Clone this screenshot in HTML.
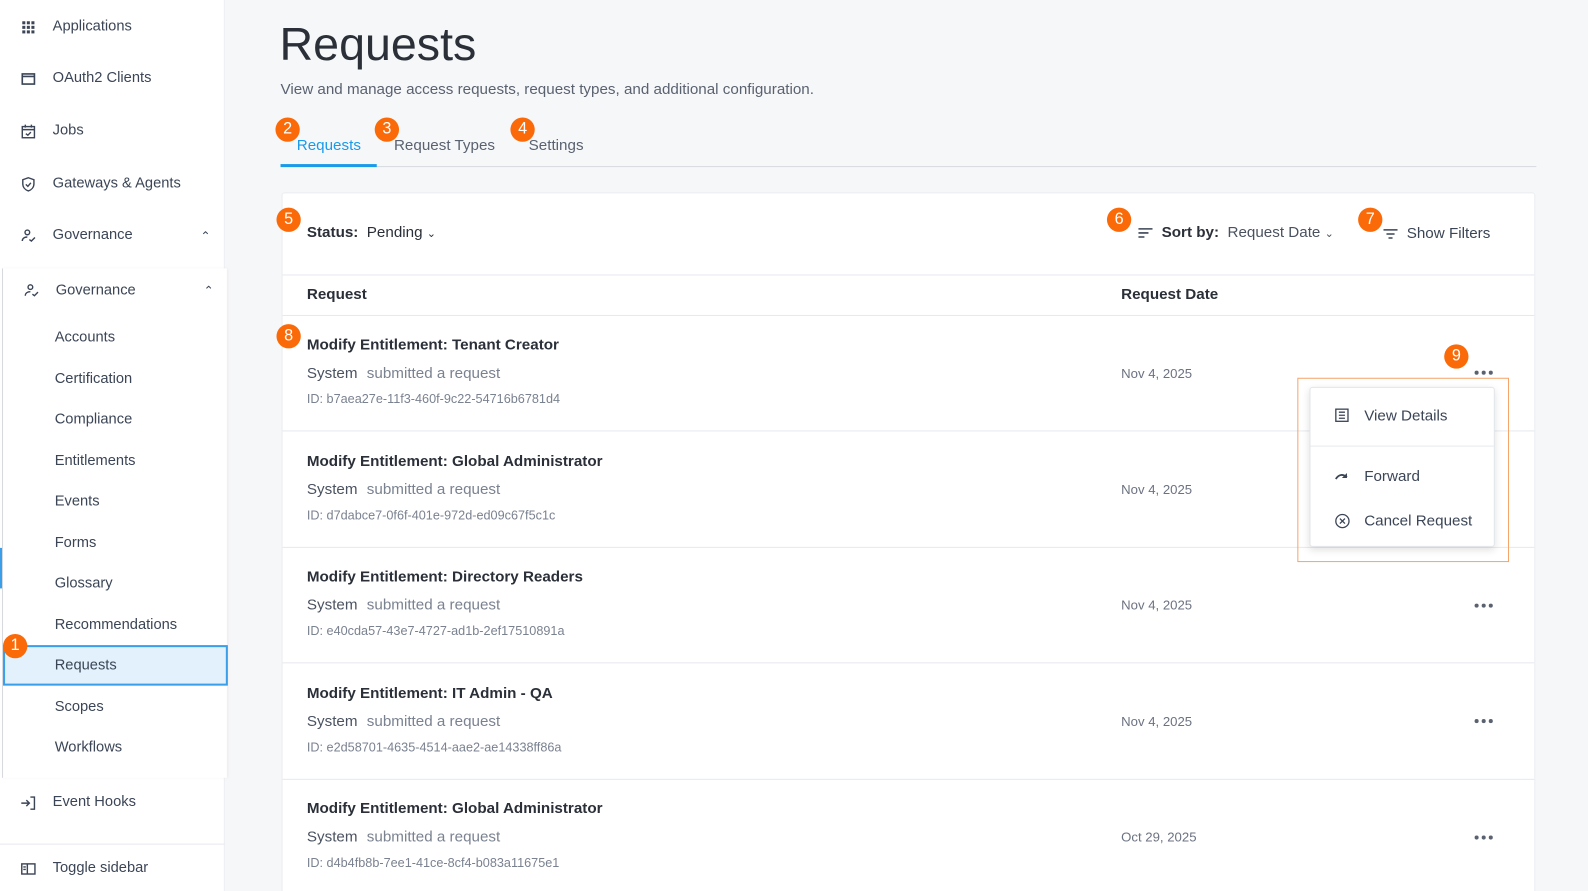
<!DOCTYPE html>
<html><head><meta charset="utf-8"><style>
*{box-sizing:border-box;margin:0;padding:0}
html,body{width:1588px;height:891px;overflow:hidden;background:#f6f7f9}
body{font-family:"Liberation Sans",sans-serif;color:#1f2937;position:relative}
#w{position:absolute;left:0;top:0;width:1568px;height:880px;transform:scale(1.01276);transform-origin:0 0}
.abs{position:absolute}
.sb{position:absolute;left:0;top:0;width:222px;height:880px;background:#fff;border-right:1px solid #eceef2}
.it{position:absolute;left:52px;font-size:14.5px;color:#3b4556;white-space:nowrap}
.ic{position:absolute;left:20px;width:16px;height:16px}
.sub{position:absolute;left:2px;top:265px;width:222px;height:503px;background:#fff;border-left:1px solid #d6d9de;box-shadow:1px 0 3px rgba(0,0,0,.05)}
.badge{position:absolute;width:24px;height:24px;border-radius:50%;background:#fb6a08;color:#fff;font-size:16px;text-align:center;line-height:24px}
.card{position:absolute;left:278px;top:190px;width:1238px;height:720px;background:#fff;border:1px solid #eaecf0;border-radius:3px}
.hl{position:absolute;left:0;right:0;height:1px;background:#e6e9ee}
.t{position:absolute;left:24px;font-size:15px;font-weight:bold;color:#2a2f38;white-space:nowrap}
.s{position:absolute;left:24px;font-size:15px;color:#4a5260;white-space:nowrap}
.s span{color:#7a8290;margin-left:5px}
.id{position:absolute;left:24px;font-size:12.5px;color:#7a8290;white-space:nowrap}
.d{position:absolute;left:828px;font-size:13px;color:#6b7280}
.dots{position:absolute;left:1177px;display:flex;gap:3px}
.dots i{display:block;width:4px;height:4px;border-radius:50%;background:#5a6270}
</style></head><body><div id="w">
<div class="sb">
 <svg class="ic" style="top:19px" viewBox="0 0 16 16" fill="#3b4556"><rect x="2" y="2" width="3" height="3"/><rect x="6.5" y="2" width="3" height="3"/><rect x="11" y="2" width="3" height="3"/><rect x="2" y="6.5" width="3" height="3"/><rect x="6.5" y="6.5" width="3" height="3"/><rect x="11" y="6.5" width="3" height="3"/><rect x="2" y="11" width="3" height="3"/><rect x="6.5" y="11" width="3" height="3"/><rect x="11" y="11" width="3" height="3"/></svg>
 <div class="it" style="top:18px">Applications</div>
 <svg class="ic" style="top:70px" viewBox="0 0 16 16" fill="none" stroke="#3b4556" stroke-width="1.6"><rect x="2" y="3" width="12" height="10"/><line x1="2" y1="5.5" x2="14" y2="5.5"/></svg>
 <div class="it" style="top:69px">OAuth2 Clients</div>
 <svg class="ic" style="top:122px" viewBox="0 0 16 16" fill="none" stroke="#3b4556" stroke-width="1.4"><rect x="2" y="3" width="12" height="11"/><line x1="2" y1="6" x2="14" y2="6"/><line x1="5" y1="1" x2="5" y2="4"/><line x1="11" y1="1" x2="11" y2="4"/><path d="M5.5 10l2 1.5 3-3"/></svg>
 <div class="it" style="top:121px">Jobs</div>
 <svg class="ic" style="top:174px" viewBox="0 0 16 16" fill="none" stroke="#3b4556" stroke-width="1.4"><path d="M8 1.5l5.5 2v4c0 3.5-2.5 6-5.5 7-3-1-5.5-3.5-5.5-7v-4z"/><path d="M5.5 8l2 2 3-3.5"/></svg>
 <div class="it" style="top:173px">Gateways &amp; Agents</div>
 <svg class="ic" style="top:225px" viewBox="0 0 16 16" fill="none" stroke="#3b4556" stroke-width="1.4"><circle cx="7" cy="4.5" r="2.3"/><path d="M2 13c0-2.5 2-4 5-4"/><path d="M9 11.5l2 1.5 3.5-3.5"/></svg>
 <div class="it" style="top:224px">Governance</div>
 <div class="abs" style="left:198px;top:226px;font-size:12px;color:#3b4556">&#8963;</div>
 <svg class="ic" style="top:785px" viewBox="0 0 16 16" fill="none" stroke="#3b4556" stroke-width="1.4"><path d="M1 8h8M6 5l3 3-3 3"/><path d="M10 2h4v12h-4"/></svg>
 <div class="it" style="top:784px">Event Hooks</div>
 <div class="abs" style="left:0;top:833px;width:222px;height:1px;background:#e6e9ee"></div>
 <svg class="ic" style="top:850px" viewBox="0 0 16 16" fill="none" stroke="#3b4556" stroke-width="1.4"><rect x="1.5" y="3" width="13" height="10"/><line x1="7" y1="3" x2="7" y2="13"/><line x1="3" y1="6" x2="5.5" y2="6"/><line x1="3" y1="8.5" x2="5.5" y2="8.5"/></svg>
 <div class="it" style="top:849px">Toggle sidebar</div>
</div>
<div class="sub">
 <svg class="ic" style="left:20px;top:14px" viewBox="0 0 16 16" fill="none" stroke="#3b4556" stroke-width="1.4"><circle cx="7" cy="4.5" r="2.3"/><path d="M2 13c0-2.5 2-4 5-4"/><path d="M9 11.5l2 1.5 3.5-3.5"/></svg>
 <div class="it" style="top:14px">Governance</div>
 <div class="abs" style="left:198px;top:15px;font-size:12px;color:#3b4556">&#8963;</div>
 <div class="it" style="left:51px;top:60px">Accounts</div>
 <div class="it" style="left:51px;top:101px">Certification</div>
 <div class="it" style="left:51px;top:141px">Compliance</div>
 <div class="it" style="left:51px;top:182px">Entitlements</div>
 <div class="it" style="left:51px;top:222px">Events</div>
 <div class="it" style="left:51px;top:263px">Forms</div>
 <div class="it" style="left:51px;top:303px">Glossary</div>
 <div class="it" style="left:51px;top:344px">Recommendations</div>
 <div class="abs" style="left:0;top:372px;width:222px;height:40px;background:#e2f1fb;border:2px solid #3a9ee8"></div>
 <div class="it" style="left:51px;top:384px">Requests</div>
 <div class="it" style="left:51px;top:425px">Scopes</div>
 <div class="it" style="left:51px;top:465px">Workflows</div>
</div>
<div class="abs" style="left:0;top:541px;width:2px;height:40px;background:#3a9ee8"></div>
<div class="badge" style="left:3px;top:626px">1</div>

<div class="abs" style="left:276px;top:16px;font-size:46px;color:#2a2f38;font-weight:300">Requests</div>
<div class="abs" style="left:277px;top:80px;font-size:15px;color:#5a6270">View and manage access requests, request types, and additional configuration.</div>
<div class="abs" style="left:277px;top:164px;width:1240px;height:1px;background:#d6d9de"></div>
<div class="abs" style="left:277px;top:162px;width:95px;height:3px;background:#1a9ae8"></div>
<div class="abs" style="left:293px;top:135px;font-size:15px;color:#1a9ae8">Requests</div>
<div class="abs" style="left:389px;top:135px;font-size:15px;color:#5a6270">Request Types</div>
<div class="abs" style="left:522px;top:135px;font-size:15px;color:#5a6270">Settings</div>
<div class="badge" style="left:272px;top:116px">2</div>
<div class="badge" style="left:370px;top:116px">3</div>
<div class="badge" style="left:504px;top:116px">4</div>

<div class="card">
 <div class="abs" style="left:24px;top:30px;font-size:15px;color:#2a2f38"><b>Status:</b>&nbsp; Pending <span style="font-size:11px">&#8964;</span></div>
 <svg class="abs" style="left:845px;top:33px" width="14" height="12" viewBox="0 0 14 12" stroke="#3b4556" stroke-width="1.5"><line x1="0" y1="2" x2="14" y2="2"/><line x1="0" y1="6" x2="10" y2="6"/><line x1="0" y1="10" x2="6" y2="10"/></svg>
 <div class="abs" style="left:868px;top:30px;font-size:15px;color:#4a5260"><b style="color:#2a2f38">Sort by:</b>&nbsp; Request Date <span style="font-size:11px">&#8964;</span></div>
 <svg class="abs" style="left:1087px;top:34px" width="14" height="12" viewBox="0 0 14 12" stroke="#3b4556" stroke-width="1.5"><line x1="0" y1="2" x2="14" y2="2"/><line x1="3" y1="6" x2="11" y2="6"/><line x1="5" y1="10" x2="9" y2="10"/></svg>
 <div class="abs" style="left:1110px;top:31px;font-size:15px;color:#3b4556">Show Filters</div>
 <div class="hl" style="top:80px"></div>
 <div class="t" style="top:91px">Request</div><div class="t" style="left:828px;top:91px">Request Date</div>
 <div class="hl" style="top:120px"></div>

 <div class="t" style="top:141px">Modify Entitlement: Tenant Creator</div>
 <div class="s" style="top:169px">System <span>submitted a request</span></div>
 <div class="id" style="top:196px">ID: b7aea27e-11f3-460f-9c22-54716b6781d4</div>
 <div class="d" style="top:170px">Nov 4, 2025</div>
 <div class="dots" style="top:175px"><i></i><i></i><i></i></div>
 <div class="hl" style="top:234px"></div>

 <div class="t" style="top:256px">Modify Entitlement: Global Administrator</div>
 <div class="s" style="top:284px">System <span>submitted a request</span></div>
 <div class="id" style="top:311px">ID: d7dabce7-0f6f-401e-972d-ed09c67f5c1c</div>
 <div class="d" style="top:285px">Nov 4, 2025</div>
 <div class="hl" style="top:349px"></div>

 <div class="t" style="top:370px">Modify Entitlement: Directory Readers</div>
 <div class="s" style="top:398px">System <span>submitted a request</span></div>
 <div class="id" style="top:425px">ID: e40cda57-43e7-4727-ad1b-2ef17510891a</div>
 <div class="d" style="top:399px">Nov 4, 2025</div>
 <div class="dots" style="top:405px"><i></i><i></i><i></i></div>
 <div class="hl" style="top:463px"></div>

 <div class="t" style="top:485px">Modify Entitlement: IT Admin - QA</div>
 <div class="s" style="top:513px">System <span>submitted a request</span></div>
 <div class="id" style="top:540px">ID: e2d58701-4635-4514-aae2-ae14338ff86a</div>
 <div class="d" style="top:514px">Nov 4, 2025</div>
 <div class="dots" style="top:519px"><i></i><i></i><i></i></div>
 <div class="hl" style="top:578px"></div>

 <div class="t" style="top:599px">Modify Entitlement: Global Administrator</div>
 <div class="s" style="top:627px">System <span>submitted a request</span></div>
 <div class="id" style="top:654px">ID: d4b4fb8b-7ee1-41ce-8cf4-b083a11675e1</div>
 <div class="d" style="top:628px">Oct 29, 2025</div>
 <div class="dots" style="top:634px"><i></i><i></i><i></i></div>
</div>
<div class="badge" style="left:273px;top:205px">5</div>
<div class="badge" style="left:1093px;top:205px">6</div>
<div class="badge" style="left:1341px;top:205px">7</div>
<div class="badge" style="left:273px;top:320px">8</div>
<div class="badge" style="left:1426px;top:340px">9</div>

<div class="abs" style="left:1281px;top:373px;width:209px;height:182px;border:1px solid #f5a46a"></div>
<div class="abs" style="left:1293px;top:382px;width:183px;height:158px;background:#fff;border:1px solid #e3e6ea;border-radius:3px;box-shadow:0 3px 8px rgba(0,0,0,.12)">
 <svg class="abs" style="left:24px;top:20px" width="14" height="14" viewBox="0 0 14 14" fill="none" stroke="#3b4556" stroke-width="1.3"><rect x="1" y="1" width="12" height="12"/><line x1="4" y1="4" x2="10" y2="4"/><line x1="4" y1="7" x2="10" y2="7"/><line x1="4" y1="10" x2="10" y2="10"/></svg>
 <div class="abs" style="left:53px;top:19px;font-size:15px;color:#3b4556">View Details</div>
 <div class="abs" style="left:0;right:0;top:57px;height:1px;background:#e6e9ee"></div>
 <svg class="abs" style="left:24px;top:82px" width="16" height="10" viewBox="0 0 16 10" fill="none" stroke="#3b4556" stroke-width="1.8"><path d="M1 8c3-5 7-5 11-2"/><path d="M12 2v5h-5" fill="#3b4556" stroke="none"/></svg>
 <div class="abs" style="left:53px;top:79px;font-size:15px;color:#3b4556">Forward</div>
 <svg class="abs" style="left:24px;top:124px" width="15" height="15" viewBox="0 0 15 15" fill="none" stroke="#3b4556" stroke-width="1.3"><circle cx="7.5" cy="7.5" r="6.5"/><path d="M5 5l5 5M10 5l-5 5"/></svg>
 <div class="abs" style="left:53px;top:123px;font-size:15px;color:#3b4556">Cancel Request</div>
</div>
</div></body></html>
